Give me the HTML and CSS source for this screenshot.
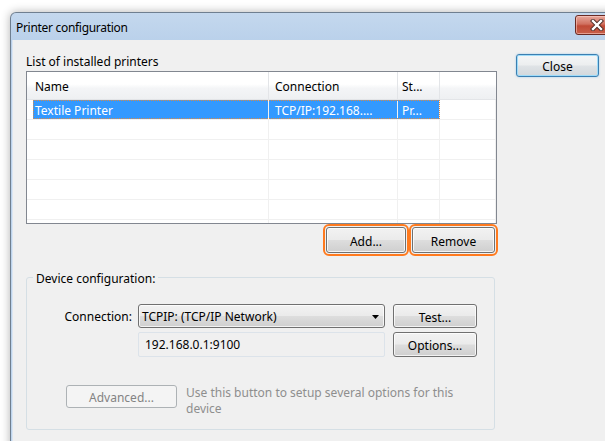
FILE: index.html
```html
<!DOCTYPE html>
<html lang="en">
<head>
<meta charset="utf-8">
<title>Printer configuration</title>
<link rel="stylesheet" href="styles.css">
</head>
<body>
<div class="desktop">
  <div class="window">
    <div class="titlebar">
      <span class="caption">Printer configuration</span>
      <button class="close-x" aria-label="Close">
        <svg width="16" height="12" viewBox="0 0 16 12">
          <path d="M4 2 L12 10 M12 2 L4 10" stroke="#4a2a24" stroke-width="4.2" stroke-linecap="square"/>
          <path d="M4 2 L12 10 M12 2 L4 10" stroke="#ffffff" stroke-width="2.4" stroke-linecap="square"/>
        </svg>
      </button>
    </div>
    <div class="client">
      <div class="main">
        <div class="label">List of installed printers</div>
        <div class="listview">
          <div class="lv-header">
            <div class="hcell c-name">Name</div>
            <div class="hcell c-conn">Connection</div>
            <div class="hcell c-stat">St...</div>
            <div class="hcell c-fill"></div>
          </div>
          <div class="lv-row">
            <div class="indent"></div>
            <div class="selected">
              <div class="cell c-name-b">Textile Printer</div>
              <div class="cell c-conn">TCP/IP:192.168....</div>
              <div class="cell c-stat">Pr...</div>
            </div>
            <div class="cell c-fill"></div>
          </div>
          <div class="lv-row"><div class="indent"></div><div class="cell c-name-b"></div><div class="cell c-conn"></div><div class="cell c-stat"></div><div class="cell c-fill"></div></div>
          <div class="lv-row"><div class="indent"></div><div class="cell c-name-b"></div><div class="cell c-conn"></div><div class="cell c-stat"></div><div class="cell c-fill"></div></div>
          <div class="lv-row"><div class="indent"></div><div class="cell c-name-b"></div><div class="cell c-conn"></div><div class="cell c-stat"></div><div class="cell c-fill"></div></div>
          <div class="lv-row"><div class="indent"></div><div class="cell c-name-b"></div><div class="cell c-conn"></div><div class="cell c-stat"></div><div class="cell c-fill"></div></div>
          <div class="lv-row"><div class="indent"></div><div class="cell c-name-b"></div><div class="cell c-conn"></div><div class="cell c-stat"></div><div class="cell c-fill"></div></div>
          <div class="lv-row"><div class="indent"></div><div class="cell c-name-b"></div><div class="cell c-conn"></div><div class="cell c-stat"></div><div class="cell c-fill"></div></div>
        </div>
        <div class="list-actions">
          <button class="btn btn-add marked">Add...</button>
          <button class="btn btn-remove marked">Remove</button>
        </div>
        <div class="group">
          <div class="group-title">Device configuration:</div>
          <div class="grow grow-1">
            <span class="field-label">Connection:</span>
            <div class="combo">
              <span>TCPIP: (TCP/IP Network)</span>
              <svg class="arrow" width="7" height="4" viewBox="0 0 7 4"><path d="M0 0 H7 L3.5 4 Z" fill="#000"/></svg>
            </div>
            <button class="btn btn-side">Test...</button>
          </div>
          <div class="grow grow-2">
            <div class="textbox">192.168.0.1:9100</div>
            <button class="btn btn-side btn-opt">Options...</button>
          </div>
          <div class="grow grow-3">
            <button class="btn btn-disabled" disabled>Advanced...</button>
            <p class="hint">Use this button to setup several options for this<br>device</p>
          </div>
        </div>
      </div>
      <div class="side">
        <button class="btn btn-default">Close</button>
      </div>
    </div>
  </div>
</div>
</body>
</html>
```

FILE: styles.css
```css
html, body {
  margin: 0;
  padding: 0;
  overflow: hidden;
  background: #ffffff;
}

body {
  font-family: "Noto Sans", "Open Sans", sans-serif;
  font-size: 12px;
  color: #000;
}

.desktop {
  width: 605px;
  height: 441px;
  padding: 12px 0 0 10px;
  box-sizing: border-box;
  overflow: hidden;
}

.window {
  width: 615px;
  height: 460px;
  box-sizing: border-box;
  border: 1px solid #6f7f90;
  border-bottom: none;
  border-radius: 6px 6px 0 0;
  background: linear-gradient(#c4d8ee, #b9d0ea 30px, #bed5ed);
  box-shadow: 0 0 10px rgba(0, 0, 0, 0.3);
  padding-left: 1px;
  display: flex;
  flex-direction: column;
}

/* caption bar */
.titlebar {
  height: 27px;
  display: flex;
  align-items: flex-start;
  padding-left: 4px;
  flex: none;
}

.caption {
  font-size: 12px;
  letter-spacing: -0.3px;
  line-height: 27px;
  padding-top: 1px;
  color: #000;
}

.close-x {
  margin: 2px 6px 0 auto;
  width: 43px;
  height: 20px;
  padding: 0;
  border: 1px solid #6a2a23;
  border-radius: 3px;
  background: linear-gradient(#e7a79b 0%, #d0705f 45%, #c04a36 55%, #c8604a 100%);
  box-shadow: inset 0 0 0 1px rgba(255, 210, 200, 0.55);
  display: flex;
  align-items: center;
  justify-content: center;
}

/* client area */
.client {
  flex: 1;
  background: #f0f0f0;
  border-left: 1px solid #dbe6f3;
  display: flex;
  padding: 12px 0 0 13px;
}

.main {
  width: 471px;
  flex: none;
}

.label {
  line-height: 18px;
  padding-top: 1px;
}

/* list view */
.listview {
  height: 153px;
  box-sizing: border-box;
  border: 1px solid #828790;
  background: #fff;
  overflow: hidden;
}

.lv-header {
  display: flex;
  height: 28px;
  background: linear-gradient(#ffffff 0%, #ffffff 45%, #f4f5f7 60%, #eef0f2 100%);
  border-bottom: 1px solid #e3e5e8;
  box-sizing: border-box;
}

.hcell {
  line-height: 25px;
  padding-top: 2px;
  box-sizing: border-box;
  border-right: 1px solid #e3e5e8;
  white-space: nowrap;
  overflow: hidden;
}

.c-name { width: 242px; padding-left: 8px; }
.c-conn { width: 129px; padding-left: 6px; }
.c-stat { width: 42px; padding-left: 4px; }
.c-fill { flex: 1; border-right: none; }

.lv-row {
  display: flex;
  height: 20px;
  box-sizing: border-box;
  border-bottom: 1px solid #f0f0f0;
}

.indent {
  width: 6px;
  flex: none;
}

.selected {
  display: flex;
  background: #3399ff;
  color: #fff;
  outline: 1px dotted #d88a48;
  outline-offset: -1px;
}

.cell {
  line-height: 19px;
  padding-top: 1px;
  box-sizing: border-box;
  border-right: 1px solid #f0f0f0;
  white-space: nowrap;
  overflow: hidden;
}

.c-name-b { width: 236px; padding-left: 2px; }

/* buttons */
.btn {
  font-family: inherit;
  font-size: 12px;
  color: #000;
  box-sizing: border-box;
  border: 1px solid #707070;
  border-radius: 3px;
  background: linear-gradient(#f2f2f2 0%, #ebebeb 48%, #dddddd 52%, #cfcfcf 100%);
  box-shadow: inset 0 0 0 1px rgba(255, 255, 255, 0.75);
  padding: 2px 0 0;
  text-align: center;
}

.list-actions {
  display: flex;
  justify-content: flex-end;
  gap: 6px;
  margin-top: 3px;
  padding-right: 2px;
}

.btn-add { width: 80px; height: 26px; }
.btn-remove { width: 83px; height: 26px; }

.marked {
  outline: 2px solid #ff7a1e;
  outline-offset: 1px;
}

.side {
  margin-left: 19px;
  padding-top: 2px;
}

.btn-default {
  width: 83px;
  height: 23px;
  border-color: #3c7fb1;
  box-shadow: inset 0 0 0 1px #9fdcf9, 0 0 2px rgba(60, 160, 230, 0.5);
  background: linear-gradient(#f4f6f7 0%, #eceeef 48%, #dfe3e6 52%, #d3d8dc 100%);
}

/* device group */
.group {
  margin-top: 24px;
  width: 469px;
  box-sizing: border-box;
  border: 1px solid #d5dfe5;
  border-radius: 3px;
  padding-bottom: 12px;
}

.group-title {
  margin: -8px 0 0 6px;
  padding: 0 3px;
  line-height: 18px;
  width: max-content;
  background: #f0f0f0;
}

.grow {
  display: flex;
  align-items: center;
}

.grow-1 { margin-top: 16px; }
.grow-2 { margin-top: 4px; padding-left: 111px; }
.grow-3 { margin-top: 28px; padding-left: 39px; align-items: flex-start; }

.field-label {
  width: 105px;
  text-align: right;
  padding-top: 1px;
}

.combo {
  margin-left: 6px;
  width: 247px;
  height: 24px;
  box-sizing: border-box;
  border: 1px solid #707070;
  border-radius: 3px;
  background: linear-gradient(#f2f2f2 0%, #ebebeb 48%, #dddddd 52%, #cfcfcf 100%);
  box-shadow: inset 0 0 0 1px rgba(255, 255, 255, 0.75);
  display: flex;
  align-items: center;
  padding: 1px 5px 0 3px;
}

.combo span { flex: 1; }

.btn-side {
  margin-left: 8px;
  width: 84px;
  height: 24px;
}

.btn-opt { height: 25px; }

.textbox {
  width: 247px;
  height: 25px;
  box-sizing: border-box;
  border: 1px solid #dce3ea;
  border-radius: 2px;
  background: #f0f0f0;
  padding: 1px 0 0 6px;
  line-height: 22px;
}

.btn-disabled {
  width: 111px;
  height: 23px;
  color: #838383;
  border-color: #adb2b5;
  background: #f4f4f4;
  box-shadow: none;
}

.hint {
  margin: 0 0 0 9px;
  line-height: 16px;
  color: #8e8e8e;
}
```
